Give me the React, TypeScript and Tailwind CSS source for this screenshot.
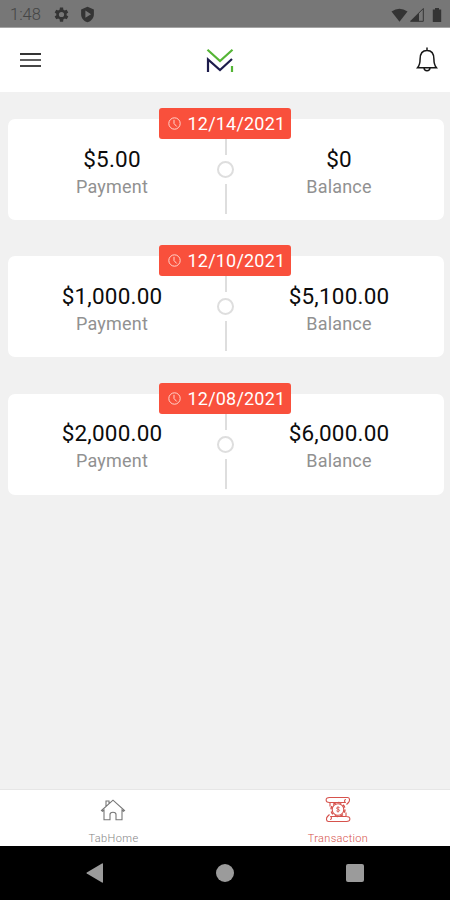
const transactions = [
  { date: "12/14/2021", payment: "$5.00", balance: "$0" },
  { date: "12/10/2021", payment: "$1,000.00", balance: "$5,100.00" },
  { date: "12/08/2021", payment: "$2,000.00", balance: "$6,000.00" },
];

function StatusBar() {
  return (
    <div className="flex h-7 shrink-0 items-center border-b border-[#a5a5a5] bg-[#777777] pl-[10px] pr-[5px] pt-[2px] text-[#343434]">
      <span className="w-[42px] pt-px text-[16.500px] font-light leading-none text-[#454545]">1:48</span>
      <svg className="size-[19px]" viewBox="0 0 24 24" fill="currentColor" fillRule="evenodd">
        <path d="M19.4 13a7.500 7.500 0 0 0 0-2l2.100-1.600-2-3.500-2.500 1a7 7 0 0 0-1.700-1L15 3h-4l-.4 2.900a7 7 0 0 0-1.700 1l-2.500-1-2 3.500L6.500 11a7.500 7.500 0 0 0 0 2l-2.100 1.600 2 3.500 2.500-1a7 7 0 0 0 1.700 1L11 21h4l.4-2.900a7 7 0 0 0 1.700-1l2.500 1 2-3.500zM13 8.700a3.300 3.300 0 1 1 0 6.600 3.300 3.300 0 0 1 0-6.600z" transform="translate(-1 0)" />
      </svg>
      <svg className="ml-[8px] size-[17px]" viewBox="0 0 24 24" fill="currentColor" fillRule="evenodd">
        <path d="M12 1 3 5v7c0 5 3.800 9.600 9 11 5.200-1.400 9-6 9-11V5zM9 6.500l8 5-8 5z" />
      </svg>
      <svg className="ml-auto h-[14px] w-[17px]" viewBox="0 0 17 14" fill="currentColor">
        <path d="M8.500 13.800.5 3.500Q8.500-2 16.500 3.500z" />
      </svg>
      <svg className="ml-[2px] h-[14px] w-[14px]" viewBox="0 0 14 14">
        <path d="M.5 13.300 13.300.5v12.800z" fill="none" stroke="currentColor" />
        <path d="M.5 13.300 9 5v8.300z" fill="currentColor" />
      </svg>
      <svg className="ml-[8px] mr-[3px] h-[14px] w-[10px]" viewBox="0 0 10 14" fill="currentColor">
        <path d="M3 0h4v1.500h2.200V14H.8V1.500H3z" />
      </svg>
    </div>
  );
}

function Header() {
  return (
    <header className="flex h-16 shrink-0 items-center bg-white pl-5 pr-[12px]">
      <div className="flex w-[21px] flex-col gap-1">
        <div className="h-[2px] bg-[#343434]" />
        <div className="h-[2px] bg-[#606060]" />
        <div className="h-[2px] bg-[#454545]" />
      </div>
      <svg className="ml-[165px] mt-[2px] h-[26px] w-[28px]" viewBox="0 0 28 26" fill="none" strokeWidth="2.200">
        <path d="M1.500 1.700 14 13 26.500 1.700" stroke="#55b535" />
        <path d="M2 24V11.500l12 10.500L26 11" stroke="#1d1c4c" />
        <path d="M26 18v6" stroke="#55b535" />
      </svg>
      <svg className="ml-auto h-[26px] w-[22px]" viewBox="0 0 22 26" fill="none" stroke="#171717" strokeWidth="1.500">
        <path d="M11 .5v3M1.500 20.800c2-2.300 2.600-5 2.600-8.800C4.100 6 7 3.400 11 3.400s6.900 2.600 6.900 8.600c0 3.800.6 6.500 2.600 8.800zM8 21c.3 3.700 5.700 3.700 6 0" />
      </svg>
    </header>
  );
}

function Amount({ value, label }: { value: string; label: string }) {
  return (
    <div className="flex w-[209px] flex-col items-center pt-[26.600px]">
      <div className="text-[22.500px] leading-[27px] tracking-[0.200px] text-[#0c0c0c]">{value}</div>
      <div className="text-[18px] leading-[27px] tracking-[0.200px] text-[#919191]">{label}</div>
    </div>
  );
}

function TransactionCard({ date, payment, balance }: (typeof transactions)[number]) {
  return (
    <article className="relative flex h-[101px] justify-between rounded-[7px] bg-white">
      <Amount value={payment} label="Payment" />
      <div className="flex flex-col items-center pt-[19px]">
        <div className="h-[17px] w-[2px] bg-[#dedede]" />
        <div className="my-[6px] -ml-px size-[17px] shrink-0 rounded-full border-2 border-[#dedede]" />
        <div className="h-[30px] w-[2px] bg-[#dedede]" />
      </div>
      <Amount value={balance} label="Balance" />
      <div className="absolute left-[151px] top-[-11px] flex h-[31px] w-[132px] items-center rounded-[3px] bg-[#f9503c] pl-[9px] text-white">
        <svg className="size-[13px]" viewBox="0 0 13 13" fill="none" stroke="#ffd5cc" strokeWidth="1">
          <circle cx="6.500" cy="6.500" r="5.700" />
          <path d="M6 2.800v3.700l2.700 3" />
        </svg>
        <span className="ml-[7px] pt-px text-[18px] leading-none tracking-[0.200px]">{date}</span>
      </div>
    </article>
  );
}

function HomeIcon() {
  return (
    <svg className="h-[22px] w-[26px]" viewBox="0 0 26 22" fill="none" stroke="#777777" strokeWidth="1.100">
      <path d="M1.500 11.500 13 1.200l11.500 10.300-1 .8-1.500-1.200v9.700h-6v-5.300c0-3-6-3-6 0v5.300H4v-9.700l-1.500 1.200zM6 7V2h3v2.500" />
    </svg>
  );
}

function TransactionIcon() {
  return (
    <svg className="h-[27px] w-[26px]" viewBox="0 0 26 27" fill="none" stroke="#d6524c" strokeWidth="1.100">
      <path d="M20 6.500H4.500C0 6.500 0 1.500 4.500 1.500h18c2.500 0 2.500 3.500 1 5l-2 2M5 6.500v4M21 6.500c-2 0-2-3 0-3M6 20.500h15.500c4.500 0 4.500 5 0 5h-18c-2.500 0-2.500-3.500-1-5l2-2M21 20.500v-4M5 20.500c2 0 2 3 0 3" />
      <circle cx="13" cy="13.500" r="7" strokeWidth="1.400" strokeDasharray="3.300 2.200" />
      <circle cx="13" cy="13.500" r="5.800" />
      <path d="M14.600 11.600c-1.300-.8-3.300-.4-3 .7.300 1.100 3 .9 3 2.100 0 1.200-2.200 1.200-3.200.4M13 10.500v6" strokeWidth=".9" />
    </svg>
  );
}

function TabBar() {
  return (
    <nav className="flex h-[57px] shrink-0 border-t border-[#e6e6e6] bg-white text-[11px] leading-[13px] tracking-[0.300px]">
      <div className="flex flex-1 flex-col items-center pt-[9px] text-[#858585]">
        <HomeIcon />
        <span className="ml-[2px] mt-[11px] font-light tracking-[0.400px]">TabHome</span>
      </div>
      <div className="flex flex-1 flex-col items-center pt-[6px] text-[#d6524c]">
        <TransactionIcon />
        <span className="ml-px mt-[9px] font-light">Transaction</span>
      </div>
    </nav>
  );
}

function AndroidNavigation() {
  return (
    <div className="flex h-[54px] shrink-0 items-center justify-between bg-black pl-[86px] pr-[86px]">
      <svg className="h-[20px] w-[17px]" viewBox="0 0 17 20" fill="#9b9b9b">
        <path d="M16 .4q1-.4 1 .6v18q0 1-1 .6L.8 10.600q-.8-.6 0-1.200z" />
      </svg>
      <div className="size-[18px] rounded-full bg-[#9b9b9b]" />
      <div className="size-[18px] rounded-[2px] bg-[#9b9b9b]" />
    </div>
  );
}

export default function App() {
  return (
    <div className="flex h-[900px] w-[450px] flex-col overflow-hidden bg-[#f1f1f1] font-['Roboto','Noto_Sans',sans-serif]">
      <StatusBar />
      <Header />
      <main className="flex flex-1 flex-col gap-[36.400px] pl-[7.500px] pr-[6.500px] pt-[27px]">
        {transactions.map((item) => (
          <TransactionCard key={item.date} {...item} />
        ))}
      </main>
      <TabBar />
      <AndroidNavigation />
    </div>
  );
}
